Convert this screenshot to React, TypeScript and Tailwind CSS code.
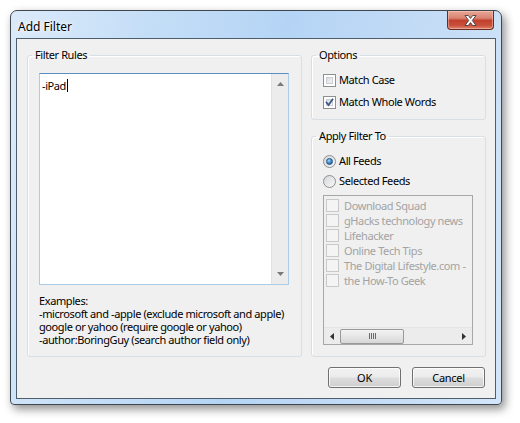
import React from "react";

const font = { fontFamily: '"Noto Sans", "Open Sans", sans-serif' };

function Check({ checked }: { checked?: boolean }) {
  return (
    <span className="relative inline-flex h-[13px] w-[13px] shrink-0 items-center justify-center border border-[#8e8f8f] bg-white">
      <span className="absolute inset-[2px] border border-[#cbcfd5] bg-[linear-gradient(135deg,#d9dbde_0%,#f4f4f5_100%)]" />
      {checked && (
        <svg className="relative" width="9" height="9" viewBox="0 0 9 9">
          <path d="M1.5 4.5 L3.5 7 L7.5 1.5" fill="none" stroke="#3b5586" strokeWidth="1.7" strokeLinecap="square" />
        </svg>
      )}
    </span>
  );
}

function Radio({ checked }: { checked?: boolean }) {
  return (
    <span className="relative inline-flex h-[13px] w-[13px] shrink-0 items-center justify-center rounded-full border border-[#8e8f8f] bg-[linear-gradient(135deg,#d6d8db_0%,#f7f7f7_100%)]">
      {checked && (
        <span className="h-[7px] w-[7px] rounded-full border border-[#1f4f84] bg-[radial-gradient(circle_at_35%_30%,#9fd6f8_0%,#3c86c8_55%,#1c4f8c_100%)]" />
      )}
    </span>
  );
}

function DisabledCheck() {
  return <span className="inline-block h-[13px] w-[13px] shrink-0 border border-[#c9c9c9] bg-[#f4f4f4]" />;
}

function Button({ children }: { children: React.ReactNode }) {
  return (
    <div className="flex h-[21px] w-[73px] items-center justify-center rounded-[3px] border border-[#707070] bg-[linear-gradient(180deg,#f2f2f2_0%,#ebebeb_48%,#dddddd_52%,#cfcfcf_100%)] text-[11px] leading-none tracking-[-0.3px] text-black shadow-[inset_0_0_0_1px_rgba(255,255,255,0.75)]">
      {children}
    </div>
  );
}

export default function App() {
  const feeds = [
    "Download Squad",
    "gHacks technology news",
    "Lifehacker",
    "Online Tech Tips",
    "The Digital Lifestyle.com -",
    "the How-To Geek",
  ];
  return (
    <div className="h-[423px] w-[520px] overflow-hidden bg-white pl-[10px] pt-[10px]" style={font}>
      <div className="flex h-[395px] w-[492px] flex-col rounded-b-[4px] rounded-t-[7px] border border-[#40474f] bg-[linear-gradient(100deg,#dbeafa_0%,#c4def7_25%,#b5d4f5_50%,#c6ddf6_80%,#d3e6f9_100%)] shadow-[3px_4px_10px_rgba(0,0,0,0.45)]">
        <div className="flex h-[27px] items-start justify-between pl-[7px] pr-[7px]">
          <div className="mt-[9px] text-[12px] leading-[14px] text-black [text-shadow:0_0_6px_#ffffff,0_0_3px_#ffffff]">Add Filter</div>
          <div className="flex h-[19px] w-[47px] items-center justify-center rounded-b-[4px] border border-t-0 border-[#6a2c22] bg-[linear-gradient(180deg,#e9a897_0%,#d98270_40%,#c2402e_52%,#c9503b_80%,#e0866d_100%)] shadow-[inset_0_0_0_1px_rgba(255,210,200,0.45)]">
            <svg width="13" height="11" viewBox="0 0 13 11">
              <path d="M1 0.5 H4.3 L6.5 3.4 L8.7 0.5 H12 L8.3 5.5 L12 10.5 H8.7 L6.5 7.6 L4.3 10.5 H1 L4.7 5.5 Z" fill="#ffffff" stroke="#3e3e3e" strokeWidth="0.9" strokeLinejoin="round" />
            </svg>
          </div>
        </div>
        <div className="mx-[5px] flex h-[361px] flex-col border border-[#4e5d6c] bg-[#f0f0f0] px-[9px] pb-[10px] pl-[10px] pt-[9px] text-[11px] tracking-[-0.4px]">
          <div className="flex gap-[9px]">
            <fieldset className="flex h-[309px] w-[275px] flex-col rounded-[3px] border border-[#d5dfe5] px-[11px] pb-[10px] pt-[11px] shadow-[inset_1px_1px_0_#ffffff]">
              <legend className="-ml-[7px] px-[3px] leading-[14px] text-black">Filter Rules</legend>
              <div className="relative flex h-[212px] w-[250px] shrink-0 border border-[#abcce8] border-t-[#5a8fc4] bg-white">
                <div className="flex-1 pl-[2px] pt-[3px] leading-[15px] text-black">
                  -iPad<span className="ml-[1px] inline-block h-[13px] w-px translate-y-[2px] bg-black" />
                </div>
                <div className="flex w-[17px] flex-col items-center justify-between border-l border-[#e2e2e2] bg-[#ececec] pb-[8px] pt-[8px]">
                  <svg width="7" height="4" viewBox="0 0 7 4"><path d="M3.5 0 L7 4 H0 Z" fill="#7a7a7a" /></svg>
                  <svg width="7" height="4" viewBox="0 0 7 4"><path d="M0 0 H7 L3.5 4 Z" fill="#7a7a7a" /></svg>
                </div>
              </div>
              <div className="mt-[9px] whitespace-nowrap leading-[13px] text-black">
                <div>Examples:</div>
                <div>-microsoft and -apple (exclude microsoft and apple)</div>
                <div>google or yahoo (require google or yahoo)</div>
                <div>-author:BoringGuy (search author field only)</div>
              </div>
            </fieldset>
            <div className="flex w-[175px] flex-col gap-[9px]">
              <fieldset className="flex h-[72px] flex-col gap-[6px] rounded-[3px] border border-[#d5dfe5] px-[11px] pt-[10px] shadow-[inset_1px_1px_0_#ffffff]">
                <legend className="-ml-[7px] px-[3px] leading-[14px] text-black">Options</legend>
                <label className="flex h-[16px] items-center gap-[3px] text-black">
                  <Check />
                  <span>Match Case</span>
                </label>
                <label className="flex h-[16px] items-center gap-[3px] text-black">
                  <Check checked />
                  <span>Match Whole Words</span>
                </label>
              </fieldset>
              <fieldset className="flex h-[228px] flex-col rounded-[3px] border border-[#d5dfe5] px-[11px] pt-[10px] shadow-[inset_1px_1px_0_#ffffff]">
                <legend className="-ml-[7px] px-[3px] leading-[14px] text-black">Apply Filter To</legend>
                <label className="flex h-[16px] items-center gap-[3px] text-black">
                  <Radio checked />
                  <span>All Feeds</span>
                </label>
                <label className="mt-[4px] flex h-[16px] items-center gap-[3px] text-black">
                  <Radio />
                  <span>Selected Feeds</span>
                </label>
                <div className="mt-[6px] flex h-[150px] w-[150px] flex-col border border-[#a7a7a7] bg-[#f0f0f0]">
                  <div className="flex flex-1 flex-col overflow-hidden pl-[2px] pt-[2px]">
                    {feeds.map((f) => (
                      <div key={f} className="flex h-[15px] items-center gap-[5px] overflow-hidden whitespace-nowrap leading-[15px] text-[#a3a3a3]">
                        <DisabledCheck />
                        <span>{f}</span>
                      </div>
                    ))}
                  </div>
                  <div className="flex h-[17px] items-center border-t border-[#e4e4e4] bg-[#ececec] px-[6px]">
                    <svg width="4" height="7" viewBox="0 0 4 7"><path d="M4 0 V7 L0 3.5 Z" fill="#333" /></svg>
                    <div className="ml-[6px] flex h-[15px] w-[64px] items-center justify-center rounded-[2px] border border-[#9a9a9a] bg-[linear-gradient(180deg,#f3f3f3_0%,#e6e6e6_50%,#d7d7d7_100%)]">
                      <div className="flex gap-[1px]">
                        <span className="h-[6px] w-px bg-[#6a6a6a]" />
                        <span className="h-[6px] w-px bg-[#6a6a6a]" />
                        <span className="h-[6px] w-px bg-[#6a6a6a]" />
                        <span className="h-[6px] w-px bg-[#6a6a6a]" />
                      </div>
                    </div>
                    <div className="flex-1" />
                    <svg width="4" height="7" viewBox="0 0 4 7"><path d="M0 0 V7 L4 3.5 Z" fill="#333" /></svg>
                  </div>
                </div>
              </fieldset>
            </div>
          </div>
          <div className="mt-[10px] flex justify-end gap-[11px] pr-[1px]">
            <Button>OK</Button>
            <Button>Cancel</Button>
          </div>
        </div>
      </div>
    </div>
  );
}
